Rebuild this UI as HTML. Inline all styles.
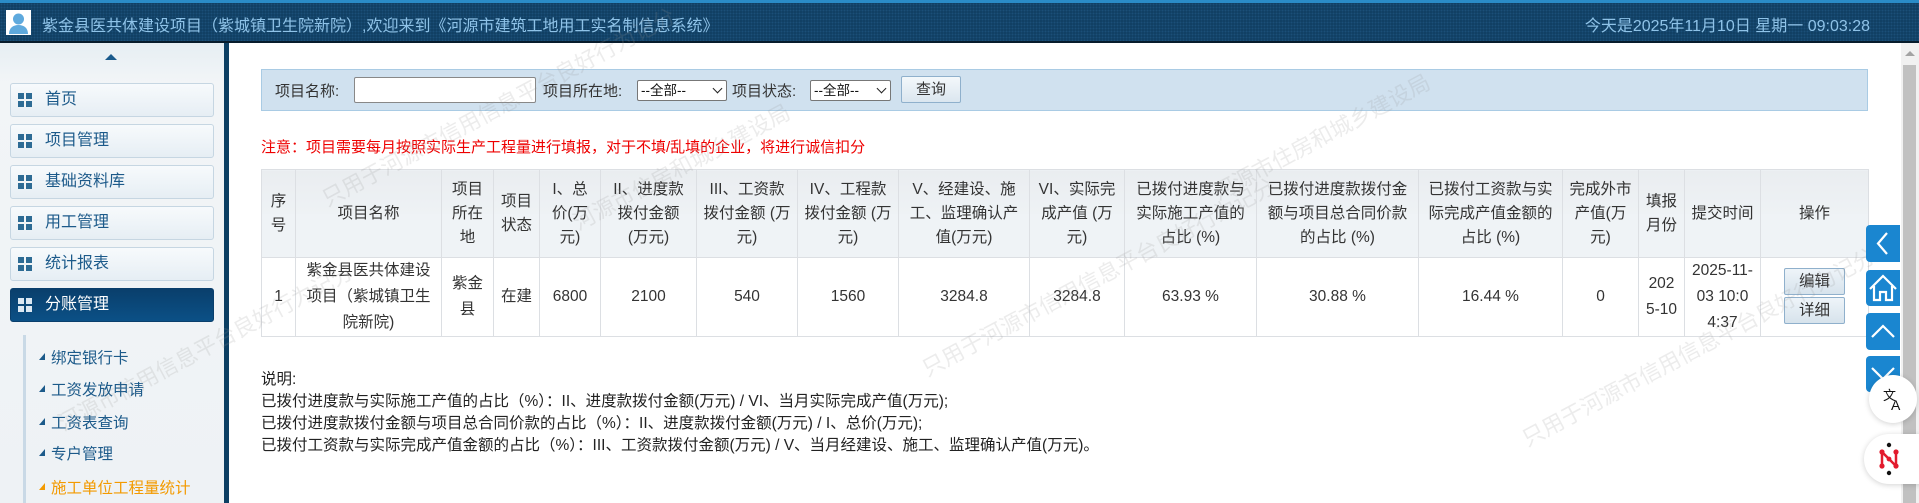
<!DOCTYPE html>
<html><head><meta charset="utf-8">
<style>
*{margin:0;padding:0;box-sizing:border-box}
body{width:1919px;height:503px;overflow:hidden;background:#fff;font-family:"Liberation Sans","Noto Sans CJK SC",sans-serif;font-size:14px;color:#333;position:relative}
.hd{position:absolute;left:0;top:0;width:1919px;height:43px;background:#0f3d60;border-top:3px solid #2a8cc8;border-bottom:2px solid #071c2c;background-image:radial-gradient(#1b4f78 1px,transparent 1.2px);background-size:3px 3px}
.av{position:absolute;left:6px;top:7px;width:25px;height:25px;background:#fff}
.hd .t{position:absolute;left:42px;top:9px;font-size:16px;color:#8fc3e8;white-space:nowrap}
.hd .d{position:absolute;right:49px;top:9px;font-size:16px;color:#8fc3e8;white-space:nowrap}
.sb{position:absolute;left:0;top:43px;width:224px;height:460px;background:linear-gradient(#e6eef3,#f2f5f7 40px,#eef2f5)}
.sbl{position:absolute;left:224px;top:43px;width:5px;height:460px;background:#0c3f63}
.up{position:absolute;left:105px;top:54px;width:0;height:0;border-left:6px solid transparent;border-right:6px solid transparent;border-bottom:6px solid #1a5a8c}
.mi{position:absolute;left:10px;width:204px;height:34px;border:1px solid #c6d6e2;border-radius:3px;background:linear-gradient(#f7fafc,#e6eef4);color:#1c5a8a;font-size:16px;line-height:32px;padding-left:34px}
.mi i{position:absolute;left:7px;top:9px;width:14px;height:14px;background:linear-gradient(90deg,transparent 6px,#f2f5f7 6px,#f2f5f7 8px,transparent 8px),linear-gradient(transparent 6px,#f2f5f7 6px,#f2f5f7 8px,transparent 8px),#2d6b94}
.mi.a{background:linear-gradient(#0a3f6c,#0b5086);border-color:#0a3f6c;color:#fff}
.mi.a i{background:linear-gradient(90deg,transparent 6px,#0b4878 6px,#0b4878 8px,transparent 8px),linear-gradient(transparent 6px,#0b4878 6px,#0b4878 8px,transparent 8px),#dbe8f3}
.vl{position:absolute;left:23px;top:335px;width:3px;height:168px;background:#c9d9e6}
.si{position:absolute;left:51px;font-size:15.5px;color:#1c5a8a;white-space:nowrap}
.si:before{content:"";position:absolute;left:-12px;top:7px;border-left:6px solid transparent;border-bottom:7px solid #1c5a8a}
.si.o{color:#f39a00}.si.o:before{border-bottom-color:#f39a00}
.sr{position:absolute;left:261px;top:69px;width:1607px;height:42px;background:#d0e1ef;border:1px solid #a9cbe4;font-size:15px}
.sr span{position:absolute;top:10px;white-space:nowrap}
.inp{position:absolute;left:92px;top:7px;width:182px;height:26px;background:#fff;border:1px solid #888;border-radius:2px}
.sel{position:absolute;top:10px;height:21px;background:#fff;border:1px solid #777;border-radius:2px;font-size:13.5px;line-height:19px;padding-left:3px;color:#111}
.sel:after{content:"";position:absolute;right:5px;top:4px;width:6px;height:6px;border-right:1.5px solid #222;border-bottom:1.5px solid #222;transform:rotate(45deg)}
.btn{position:absolute;left:639px;top:6px;width:60px;height:27px;border:1px solid #8fb0cc;border-radius:2px;background:linear-gradient(#f4f8fb,#dbe6ef);text-align:center;line-height:25px;font-size:15px}
.red{position:absolute;left:261px;top:136px;color:#e00;font-size:15px;white-space:nowrap}
table{position:absolute;left:261px;top:169px;border-collapse:collapse;table-layout:fixed;font-size:15.5px;color:#333}
td,th{border:1px solid #dcdfe3;text-align:center;vertical-align:middle;font-weight:normal;line-height:24px;padding:0 1px;white-space:nowrap}
th{background:linear-gradient(#eaedf0,#eef2f5 50%,#eff3f6 50%);height:88px}
tr.r td{height:76px;line-height:26px}
.b{display:block;width:61px;height:27px;margin:0 0 2px 22px;border:1px solid #8fb0cc;border-radius:2px;background:linear-gradient(#eef4f9,#d7e3ec);line-height:25px;font-size:15.5px;text-align:center}
.ex{position:absolute;left:261px;top:369px;font-size:15.5px;line-height:22px;color:#222;white-space:nowrap}
.fb{position:absolute;left:1866px;width:34px;background:#1a86d0;border-radius:4px 0 0 4px}
.scr{position:absolute;left:1901px;top:43px;width:18px;height:460px;background:#f1f1f1}
.scr .th{position:absolute;left:2px;top:22px;width:13px;height:438px;background:#c1c1c1}
.scr .ua{position:absolute;left:4px;top:8px;border-left:5px solid transparent;border-right:5px solid transparent;border-bottom:5px solid #a3a3a3}
.circ{position:absolute;background:#fff;border-radius:50%;box-shadow:0 1px 6px rgba(0,0,0,.18)}
.wm{position:absolute;color:rgba(150,150,150,.18);font-size:22px;transform:rotate(-28deg);white-space:nowrap;pointer-events:none}
</style></head><body>
<div class="hd"><div class="av"><svg width="25" height="25" viewBox="0 0 25 25"><circle cx="12.5" cy="9" r="5.5" fill="#5ea9dd"/><path d="M3 24c0-6 4-9 9.5-9s9.5 3 9.5 9z" fill="#5ea9dd"/></svg></div>
<div class="t">紫金县医共体建设项目（紫城镇卫生院新院）,欢迎来到《河源市建筑工地用工实名制信息系统》</div>
<div class="d">今天是2025年11月10日 星期一 09:03:28</div></div>
<div class="sb"></div><div class="sbl"></div><div class="up"></div>
<div class="mi" style="top:83px"><i></i>首页</div>
<div class="mi" style="top:124px"><i></i>项目管理</div>
<div class="mi" style="top:165px"><i></i>基础资料库</div>
<div class="mi" style="top:206px"><i></i>用工管理</div>
<div class="mi" style="top:247px"><i></i>统计报表</div>
<div class="mi a" style="top:288px"><i></i>分账管理</div>
<div class="vl"></div>
<div class="si" style="top:346px">绑定银行卡</div>
<div class="si" style="top:378px">工资发放申请</div>
<div class="si" style="top:411px">工资表查询</div>
<div class="si" style="top:442px">专户管理</div>
<div class="si o" style="top:476px">施工单位工程量统计</div>

<div class="sr"><span style="left:13px">项目名称:</span><div class="inp"></div><span style="left:281px">项目所在地:</span>
<div class="sel" style="left:375px;width:90px">--全部--</div><span style="left:470px">项目状态:</span>
<div class="sel" style="left:548px;width:81px">--全部--</div><div class="btn">查询</div></div>
<div class="red">注意：项目需要每月按照实际生产工程量进行填报，对于不填/乱填的企业，将进行诚信扣分</div>

<table>
<colgroup><col style="width:34px"><col style="width:146px"><col style="width:52px"><col style="width:46px"><col style="width:61px"><col style="width:96px"><col style="width:101px"><col style="width:101px"><col style="width:131px"><col style="width:95px"><col style="width:132px"><col style="width:162px"><col style="width:144px"><col style="width:76px"><col style="width:46px"><col style="width:76px"><col style="width:108px"></colgroup>
<tr><th>序<br>号</th><th>项目名称</th><th>项目<br>所在<br>地</th><th>项目<br>状态</th><th>I、总<br>价(万<br>元)</th><th>II、进度款<br>拨付金额<br>(万元)</th><th>III、工资款<br>拨付金额 (万<br>元)</th><th>IV、工程款<br>拨付金额 (万<br>元)</th><th>V、经建设、施<br>工、监理确认产<br>值(万元)</th><th>VI、实际完<br>成产值 (万<br>元)</th><th>已拨付进度款与<br>实际施工产值的<br>占比 (%)</th><th>已拨付进度款拨付金<br>额与项目总合同价款<br>的占比 (%)</th><th>已拨付工资款与实<br>际完成产值金额的<br>占比 (%)</th><th>完成外市<br>产值(万<br>元)</th><th>填报<br>月份</th><th>提交时间</th><th>操作</th></tr>
<tr class="r"><td>1</td><td>紫金县医共体建设<br>项目（紫城镇卫生<br>院新院)</td><td>紫金<br>县</td><td>在建</td><td>6800</td><td>2100</td><td>540</td><td>1560</td><td>3284.8</td><td>3284.8</td><td>63.93 %</td><td>30.88 %</td><td>16.44 %</td><td>0</td><td>202<br>5-10</td><td>2025-11-<br>03 10:0<br>4:37</td><td style="text-align:left"><span class="b">编辑</span><span class="b">详细</span></td></tr>
</table>

<div class="ex">说明:<br>已拨付进度款与实际施工产值的占比（%）：II、进度款拨付金额(万元) / VI、当月实际完成产值(万元);<br>已拨付进度款拨付金额与项目总合同价款的占比（%）：II、进度款拨付金额(万元) / I、总价(万元);<br>已拨付工资款与实际完成产值金额的占比（%）：III、工资款拨付金额(万元) / V、当月经建设、施工、监理确认产值(万元)。</div>

<div class="wm" style="left:300px;top:90px">只用于河源市信用信息平台良好行为记分</div>
<div class="wm" style="left:560px;top:150px">河源市住房和城乡建设局</div>
<div class="wm" style="left:900px;top:260px">只用于河源市信用信息平台良好行为记分</div>
<div class="wm" style="left:1200px;top:120px">河源市住房和城乡建设局</div>
<div class="wm" style="left:1500px;top:330px">只用于河源市信用信息平台良好行为记分</div>
<div class="wm" style="left:40px;top:330px">河源市信用信息平台良好行为记分</div>

<div class="scr"><div class="ua"></div><div class="th"></div></div>
<div class="fb" style="top:225px;height:37px"><svg width="34" height="37"><path d="M21 8L12 18.5 21 29" stroke="#fff" stroke-width="2.2" fill="none"/></svg></div>
<div class="fb" style="top:270px;height:36px"><svg width="34" height="36"><path d="M4 19L17 6 30 19M8 16v14h6v-8h6v8h6V16" stroke="#fff" stroke-width="2.2" fill="none"/></svg></div>
<div class="fb" style="top:313px;height:37px"><svg width="34" height="37"><path d="M6 24L17 13 28 24" stroke="#fff" stroke-width="2.2" fill="none"/></svg></div>
<div class="fb" style="top:356px;height:36px"><svg width="34" height="36"><path d="M6 12L17 23 28 12" stroke="#fff" stroke-width="2.2" fill="none"/></svg></div>
<div class="circ" style="left:1869px;top:375px;width:48px;height:48px"><svg width="48" height="48"><text x="14" y="25" font-size="13" font-family="Noto Sans CJK SC" fill="#111">文</text><text x="22" y="35" font-size="14" font-family="Liberation Sans" fill="#111">A</text></svg></div>
<div class="circ" style="left:1864px;top:434px;width:58px;height:50px;border-radius:25px 0 0 25px"><svg width="58" height="50"><path d="M18 18v14M18 18l14 14M32 18v14" stroke="#e21b2d" stroke-width="2.5" fill="none"/><circle cx="18" cy="18" r="2.6" fill="#e21b2d"/><circle cx="18" cy="32" r="2.6" fill="#e21b2d"/><circle cx="32" cy="18" r="2.6" fill="#e21b2d"/><circle cx="32" cy="32" r="2.6" fill="#e21b2d"/><circle cx="25" cy="25" r="2.4" fill="#e21b2d"/><circle cx="25" cy="11" r="2.2" fill="#111"/><circle cx="25" cy="39" r="2.2" fill="#111"/></svg></div>
</body></html>
